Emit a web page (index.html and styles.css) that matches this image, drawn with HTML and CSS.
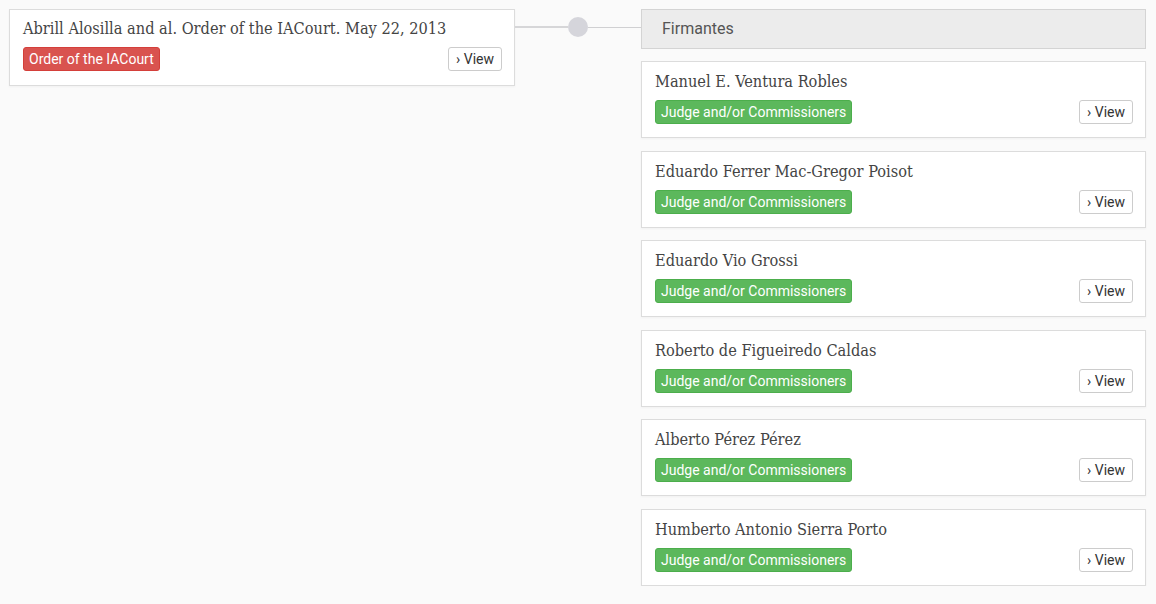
FILE: index.html
```html
<!DOCTYPE html>
<html>
<head>
<meta charset="utf-8">
<link rel="stylesheet" href="styles.css">
</head>
<body>
<div class="tree">
  <div class="left">
    <div class="card">
      <div class="title">Abrill Alosilla and al. Order of the IACourt. May 22, 2013</div>
      <div class="row">
        <span class="badge red">Order of the IACourt</span>
        <span class="btn">› View</span>
      </div>
    </div>
  </div>
  <div class="connector">
    <span class="line l1"></span>
    <span class="dot"></span>
    <span class="line l2"></span>
  </div>
  <div class="right">
    <div class="header">Firmantes</div>
    <div class="card">
      <div class="title">Manuel E. Ventura Robles</div>
      <div class="row"><span class="badge green">Judge and/or Commissioners</span><span class="btn">› View</span></div>
    </div>
    <div class="card">
      <div class="title">Eduardo Ferrer Mac-Gregor Poisot</div>
      <div class="row"><span class="badge green">Judge and/or Commissioners</span><span class="btn">› View</span></div>
    </div>
    <div class="card">
      <div class="title">Eduardo Vio Grossi</div>
      <div class="row"><span class="badge green">Judge and/or Commissioners</span><span class="btn">› View</span></div>
    </div>
    <div class="card">
      <div class="title">Roberto de Figueiredo Caldas</div>
      <div class="row"><span class="badge green">Judge and/or Commissioners</span><span class="btn">› View</span></div>
    </div>
    <div class="card">
      <div class="title">Alberto Pérez Pérez</div>
      <div class="row"><span class="badge green">Judge and/or Commissioners</span><span class="btn">› View</span></div>
    </div>
    <div class="card">
      <div class="title">Humberto Antonio Sierra Porto</div>
      <div class="row"><span class="badge green">Judge and/or Commissioners</span><span class="btn">› View</span></div>
    </div>
  </div>
</div>
</body>
</html>
```

FILE: styles.css
```css
html, body {
  margin: 0;
  padding: 0;
  background: #fafafa;
}
body {
  font-family: Roboto, "Liberation Sans", sans-serif;
  color: #333;
}
.tree {
  display: flex;
  align-items: flex-start;
  padding: 9px 0 0 9px;
}
.left {
  width: 506px;
}
.connector {
  width: 126px;
  height: 36px;
  display: flex;
  align-items: center;
}
.line {
  height: 2px;
  background: #d6d6d8;
}
.l1 { width: 53px; }
.l2 { flex: 1; height: 1px; background: #d0d0d2; }
.dot {
  width: 20px;
  height: 20px;
  border-radius: 50%;
  background: #d5d5db;
}
.right {
  width: 505px;
  display: flex;
  flex-direction: column;
  gap: 12.5px;
}
.header {
  box-sizing: border-box;
  height: 39.5px;
  background: #ececec;
  border: 1px solid #d4d4d4;
  padding-left: 20px;
  display: flex;
  align-items: center;
  font-size: 16px;
  color: #555;
}
.card {
  box-sizing: border-box;
  height: 77px;
  background: #fff;
  border: 1px solid #dcdcdc;
  box-shadow: 0 1px 2px rgba(0,0,0,0.04);
  padding: 9px 12px 0 13px;
}
.right .card {
  padding-top: 10px;
}
.title {
  font-family: "DejaVu Serif", serif;
  font-stretch: condensed;
  font-size: 16.2px;
  line-height: 20px;
  color: #444;
}
.row {
  display: flex;
  justify-content: space-between;
  align-items: flex-end;
  margin-top: 8px;
}
.badge {
  box-sizing: border-box;
  height: 24px;
  line-height: 22px;
  padding: 0 5px;
  font-size: 14px;
  color: #fff;
  border-radius: 3px;
  border: 1px solid transparent;
}
.green {
  background: #5cb85c;
  border-color: #4cae4c;
}
.red {
  background: #d9534f;
  border-color: #d43f3a;
}
.btn {
  box-sizing: border-box;
  height: 24px;
  line-height: 22px;
  padding: 0 7px 0 7.5px;
  font-size: 14px;
  color: #333;
  background: #fff;
  border: 1px solid #ccc;
  border-radius: 3px;
}
```
